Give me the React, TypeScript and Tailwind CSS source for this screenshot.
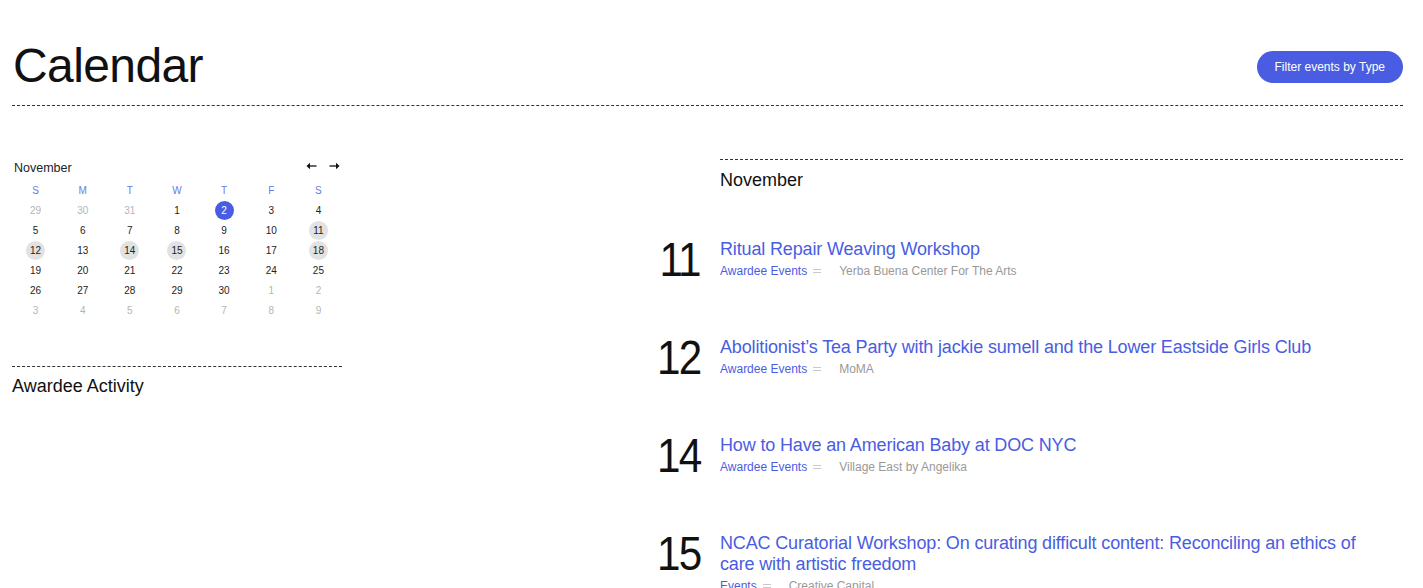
import React from "react";

const BLUE = "#4a5de2";

type Cell = { d: number; other?: boolean; today?: boolean; event?: boolean };

const weeks: Cell[][] = [
  [{ d: 29, other: true }, { d: 30, other: true }, { d: 31, other: true }, { d: 1 }, { d: 2, today: true }, { d: 3 }, { d: 4 }],
  [{ d: 5 }, { d: 6 }, { d: 7 }, { d: 8 }, { d: 9 }, { d: 10 }, { d: 11, event: true }],
  [{ d: 12, event: true }, { d: 13 }, { d: 14, event: true }, { d: 15, event: true }, { d: 16 }, { d: 17 }, { d: 18, event: true }],
  [{ d: 19 }, { d: 20 }, { d: 21 }, { d: 22 }, { d: 23 }, { d: 24 }, { d: 25 }],
  [{ d: 26 }, { d: 27 }, { d: 28 }, { d: 29 }, { d: 30 }, { d: 1, other: true }, { d: 2, other: true }],
  [{ d: 3, other: true }, { d: 4, other: true }, { d: 5, other: true }, { d: 6, other: true }, { d: 7, other: true }, { d: 8, other: true }, { d: 9, other: true }],
];

const events = [
  { day: "11", title: "Ritual Repair Weaving Workshop", type: "Awardee Events", place: "Yerba Buena Center For The Arts" },
  { day: "12", title: "Abolitionist’s Tea Party with jackie sumell and the Lower Eastside Girls Club", type: "Awardee Events", place: "MoMA" },
  { day: "14", title: "How to Have an American Baby at DOC NYC", type: "Awardee Events", place: "Village East by Angelika" },
  { day: "15", title: "NCAC Curatorial Workshop: On curating difficult content: Reconciling an ethics of care with artistic freedom", type: "Events", place: "Creative Capital" },
];

function Arrow({ dir }: { dir: "left" | "right" }) {
  return (
    <svg width="11" height="8" viewBox="0 0 11 8" className={dir === "left" ? "" : "rotate-180"}>
      <path d="M0.5 4 L4 0.8 L4 7.2 Z" fill="#111" />
      <line x1="3" y1="4" x2="10.5" y2="4" stroke="#111" strokeWidth="1.3" />
    </svg>
  );
}

function MiniCalendar() {
  return (
    <div className="w-[330px]">
      <div className="flex items-center justify-between pl-[2px] pr-[2px] h-[20px]">
        <span className="text-[12.5px] text-[#222]">November</span>
        <div className="flex items-center gap-[12px] -mt-[4px]">
          <Arrow dir="left" />
          <Arrow dir="right" />
        </div>
      </div>
      <div className="grid grid-cols-7 mt-[2px]">
        {["S", "M", "T", "W", "T", "F", "S"].map((h, i) => (
          <div key={i} className="h-[20px] flex items-center justify-center text-[10px]" style={{ color: "#6a7be6" }}>
            {h}
          </div>
        ))}
        {weeks.flat().map((c, i) => (
          <div key={i} className="h-[20px] flex items-center justify-center">
            <span
              className={
                "w-[19px] h-[19px] rounded-full flex items-center justify-center text-[10px] " +
                (c.today
                  ? "bg-[#4a5de2] text-white"
                  : c.event
                  ? "bg-[#e2e2e2] text-[#222]"
                  : c.other
                  ? "text-[#b5b5b5]"
                  : "text-[#222]")
              }
            >
              {c.d}
            </span>
          </div>
        ))}
      </div>
    </div>
  );
}

function Sep() {
  return (
    <span className="inline-flex flex-col gap-[2px] w-[8px] mx-[6px] align-middle">
      <span className="block h-[1px] bg-[#c8c8c8]" />
      <span className="block h-[1px] bg-[#c8c8c8]" />
    </span>
  );
}

export default function App() {
  return (
    <div className="min-h-screen bg-white pl-[12px] pr-[20px] text-[#111]" style={{ fontFamily: "'Liberation Sans', Arial, sans-serif" }}>
      <header className="flex items-end justify-between pt-[38px] pb-[11px] border-b border-dashed border-[#333]">
        <h1 className="text-[48px] leading-[56px] tracking-[-0.6px] text-[#111] ml-[1px]">Calendar</h1>
        <button
          className="h-[32px] px-[18px] rounded-full text-white text-[12px] mb-[11px]"
          style={{ backgroundColor: BLUE }}
        >
          Filter events by Type
        </button>
      </header>

      <div className="flex">
        <aside className="w-[330px] pt-[52px]">
          <MiniCalendar />
          <div className="mt-[46px] border-t border-dashed border-[#333] pt-[6px]">
            <h2 className="text-[18px] text-[#111]">Awardee Activity</h2>
          </div>
        </aside>

        <div className="flex-1" />

        <main className="w-[683px] pt-[53px]">
          <div className="border-t border-dashed border-[#333] pt-[7px]">
            <h2 className="text-[18px] text-[#111]">November</h2>
          </div>
          <div className="mt-[45px] flex flex-col gap-[53px]">
            {events.map((e) => (
              <div key={e.day} className="flex">
                <div className="w-[100px] -ml-[100px] pr-[20px] -mt-[3px] flex justify-end">
                  <span className="text-[48px] leading-[48px] tracking-[-2px] text-[#111] scale-x-[0.88] origin-right inline-block">
                    {e.day}
                  </span>
                </div>
                <div className="flex-1">
                  <div className="text-[18px] leading-[21px] tracking-[-0.15px] pr-[24px]" style={{ color: BLUE }}>
                    {e.title}
                  </div>
                  <div className="text-[12px] leading-[22px] flex items-center">
                    <span style={{ color: BLUE }}>{e.type}</span>
                    <Sep />
                    <span className="ml-[12px] text-[#999]">{e.place}</span>
                  </div>
                </div>
              </div>
            ))}
          </div>
        </main>
      </div>
    </div>
  );
}
